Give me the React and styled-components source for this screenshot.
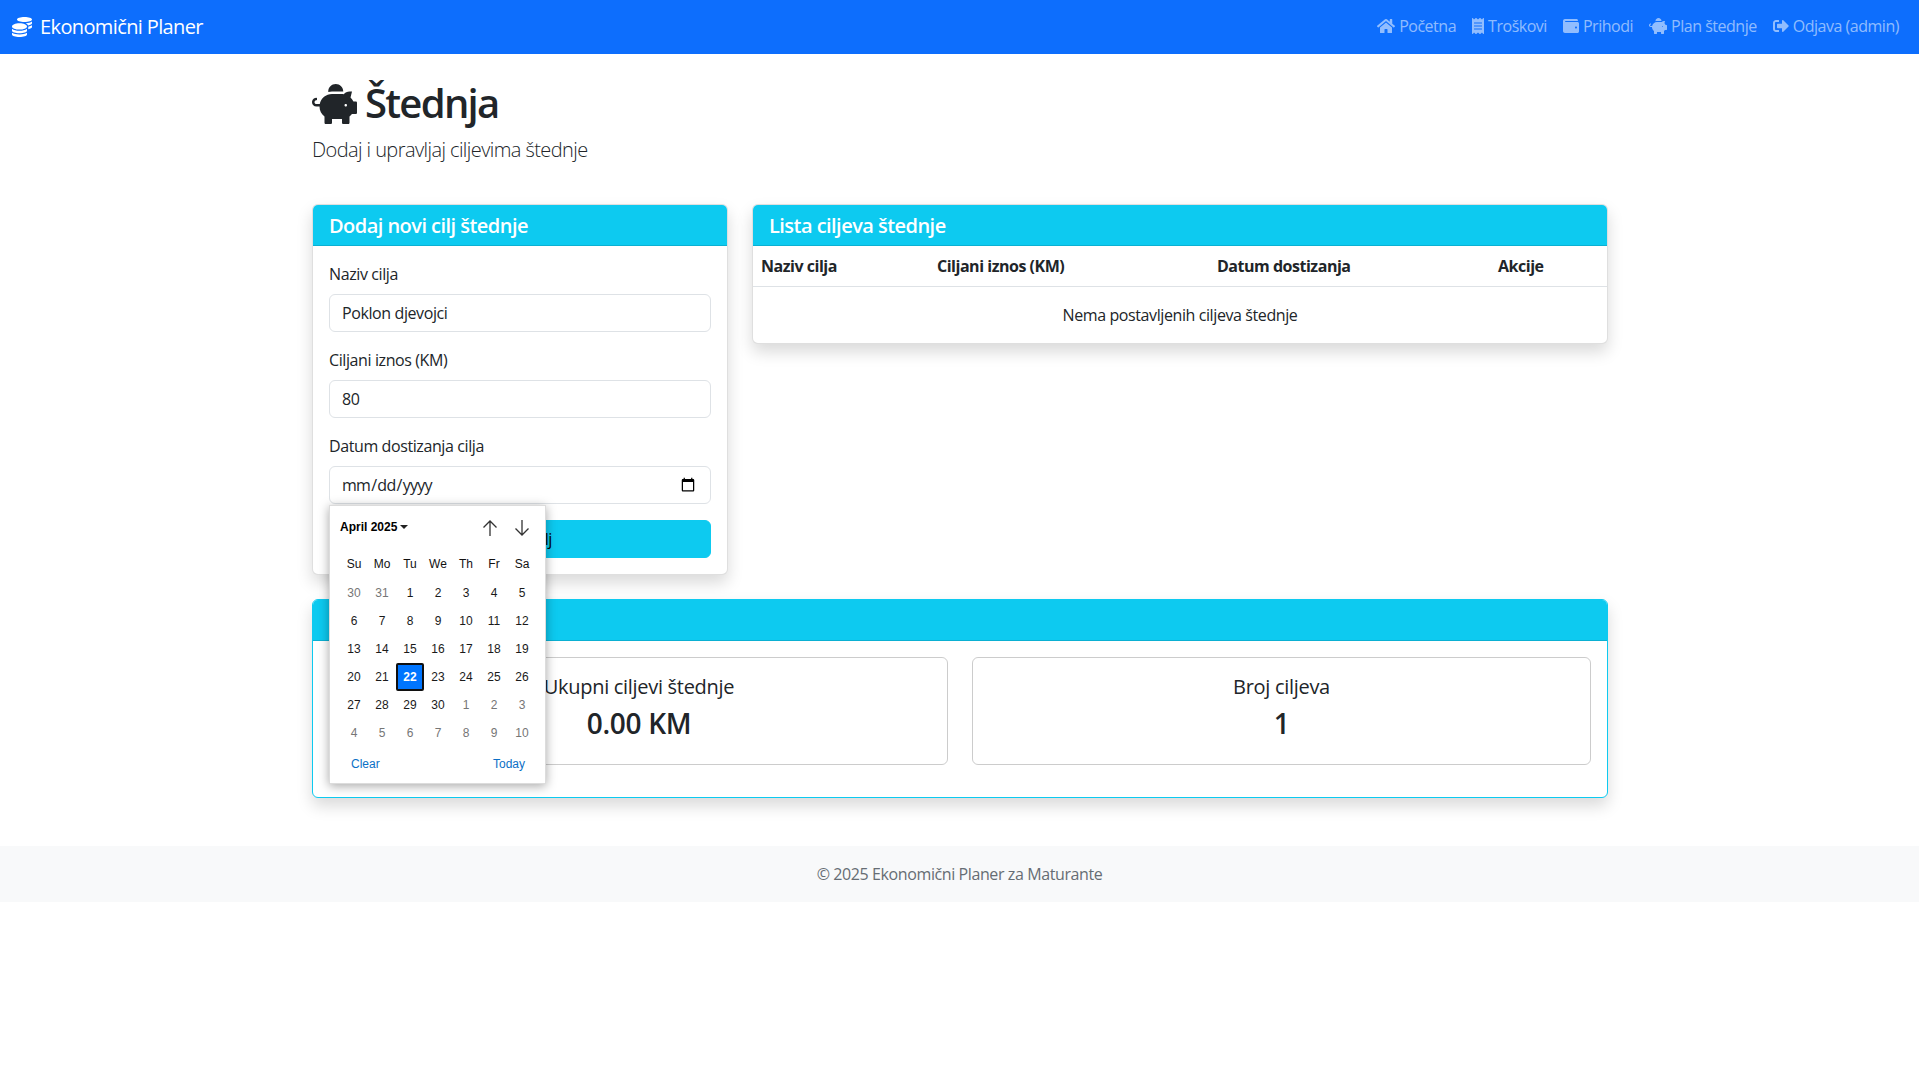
import React from "react";
import styled, { createGlobalStyle } from "styled-components";
import { FaCoins, FaHome, FaReceipt, FaWallet, FaPiggyBank, FaSignOutAlt } from "react-icons/fa";

const Global = createGlobalStyle`
  * { box-sizing: border-box; }
  html, body { margin: 0; padding: 0; background: #fff; }
  body {
    font-family: "Open Sans", "Noto Sans", sans-serif;
    font-size: 16px; line-height: 1.5; color: #212529;
    letter-spacing: -0.025em;
  }
`;

const Navbar = styled.nav`
  height: 54px; background: #0d6efd; display: flex; align-items: center;
  justify-content: space-between; padding: 0 12px;
`;
const Brand = styled.a`
  display: flex; align-items: center; gap: 8px; color: #fff; font-size: 20px; line-height: 30px;
  letter-spacing: -0.031em;
  svg { width: 20px; height: 20px; flex: none; }
`;
const NavList = styled.ul`
  display: flex; list-style: none; margin: 0 0 2px; padding: 0;
`;
const NavLink = styled.a`
  display: flex; align-items: center; gap: 4px; padding: 8px; color: rgba(255,255,255,.55);
  letter-spacing: -0.03em;
  svg { width: ${p => p.$w}px; height: 16px; flex: none; }
`;
const Main = styled.main`
  width: 1320px; margin: 24px auto 24px; padding: 0 11.5px 0 12.5px;
`;
const Title = styled.h1`
  display: flex; align-items: center; gap: 8px; margin: 0 0 8px; font-size: 40px; line-height: 46px;
  padding-top: 2px; font-weight: 600; letter-spacing: -0.043em;
  svg { width: 45px; height: 40px; flex: none; margin-bottom: -2px; }
`;
const Lead = styled.p`
  margin: 0 0 40px; font-size: 20px; line-height: 28px; padding-top: 2px; font-weight: 300; letter-spacing: -0.029em;
`;
const Row = styled.div`
  display: grid; grid-template-columns: 416px 856px; gap: 24px; margin-bottom: 24px; align-items: start;
`;
const Card = styled.section`
  background: #fff; border: 1px solid ${p => p.$info ? "#0dcaf0" : "rgba(0,0,0,.125)"}; border-radius: 6px;
  box-shadow: 0 8px 16px rgba(0,0,0,.15);
`;
const CardHeader = styled.header`
  background: #0dcaf0; color: #fff; padding: 8px 16px; border-bottom: 1px solid rgba(0,0,0,.125);
  border-radius: 5px 5px 0 0;
`;
const CardTitle = styled.h5`
  margin: 0; font-size: 20px; line-height: 23px; padding-top: 1px; font-weight: 600; letter-spacing: -0.027em;
`;
const CardBody = styled.div`
  padding: 16px;
`;
const Field = styled.div`
  position: relative; margin-bottom: 16px;
`;
const Label = styled.label`
  display: block; margin-bottom: 8px;
`;
const Input = styled.input`
  display: block; width: 100%; height: 38px; padding: 6px 12px; border: 1px solid #dee2e6; border-radius: 6px;
  font: inherit; letter-spacing: inherit; color: #212529; background: #fff; outline: none;
`;
const DateInput = styled(Input)`
  letter-spacing: -0.045em;
  padding-left: 11px;
`;
const SubmitButton = styled.button`
  display: block; width: 100%; height: 38px; border: 1px solid #0dcaf0; border-radius: 6px; background: #0dcaf0;
  color: #000; font: inherit; letter-spacing: inherit;
`;
const Popup = styled.div`
  position: absolute; left: 0; top: 71px; width: 217px; height: 279px; z-index: 5; background: #fff;
  padding: 0 9px 0 10px; font-family: "Liberation Sans", Arial, sans-serif; font-size: 12px; line-height: 14px;
  letter-spacing: 0; color: #1a1a1a; box-shadow: 0 2px 10px rgba(0,0,0,.35); border: 1px solid #dcdcdc;
  display: flex; flex-direction: column;
`;
const PopupHead = styled.div`
  display: flex; align-items: center; justify-content: space-between; height: 44px;
`;
const Month = styled.span`
  display: flex; align-items: center; gap: 3px; font-weight: 700; font-size: 12px; color: #000; margin-bottom: 2px;
  &::after { content: ""; border: 4px solid transparent; border-top-color: #222; border-bottom: 0; }
`;
const Arrows = styled.div`
  display: flex; gap: 12px; margin-right: 4px;
  svg { display: block; width: 20px; height: 20px; }
`;
const DayGrid = styled.div`
  display: grid; grid-template-columns: repeat(7, 28px); grid-template-rows: 29px repeat(6, 28px);
`;
const Cell = styled.div`
  display: flex; align-items: center; justify-content: center;
  color: ${p => p.$muted ? "#767676" : "#1a1a1a"};
  ${p => p.$head && "color:#111;padding-bottom:2px;"}
  ${p => p.$today && "background:#0075ff;color:#fff;font-weight:700;border:2px solid #101010;border-radius:2px;"}
`;
const PopupFoot = styled.div`
  display: flex; justify-content: space-between; padding: 0 11px; margin-top: 10px; color: #0b70c6;
`;
const Table = styled.table`
  width: 100%; border-collapse: collapse; table-layout: fixed;
`;
const Th = styled.th`
  padding: 8px; text-align: left; font-weight: 700; border-bottom: 1px solid #dee2e6; letter-spacing: -0.03em;
  width: ${p => p.$w}px;
`;
const Td = styled.td`
  padding: 16px 8px; text-align: center;
`;
const Stats = styled.div`
  display: grid; grid-template-columns: 1fr 619px; gap: 24px; margin: 0 0 16px 1px;
`;
const StatCard = styled.div`
  border: 1px solid rgba(0,0,0,.2); border-radius: 6px; padding: 16px; text-align: center;
`;
const StatTitle = styled.h5`
  margin: 0 0 8px; font-size: 20px; line-height: 23px; padding-top: 1px; font-weight: 500; letter-spacing: -0.015em;
`;
const StatValue = styled.h3`
  margin: 0 0 8px; font-size: 28px; line-height: 32.6px; padding-top: 1px; font-weight: 600; letter-spacing: -0.01em;
`;
const Footer = styled.footer`
  background: #f8f9fa; padding: 16px; text-align: center; height: 56px; margin-top: 48px; color: #666d74;
`;

const Up = () => (
  <svg viewBox="0 0 20 20" fill="none" stroke="#333" strokeWidth="1.3"><path d="M10 18V3M3.5 9.5 10 3l6.5 6.5" /></svg>
);
const Down = () => (
  <svg viewBox="0 0 20 20" fill="none" stroke="#333" strokeWidth="1.3"><path d="M10 2v15M3.5 10.5 10 17l6.5-6.5" /></svg>
);

const heads = ["Su", "Mo", "Tu", "We", "Th", "Fr", "Sa"];
const days = [
  [30, 1], [31, 1], ...Array.from({ length: 30 }, (_, i) => [i + 1, 0]),
  [1, 1], [2, 1], [3, 1], [4, 1], [5, 1], [6, 1], [7, 1], [8, 1], [9, 1], [10, 1],
];
const links = [
  [FaHome, "Početna", 18], [FaReceipt, "Troškovi", 12], [FaWallet, "Prihodi", 16],
  [FaPiggyBank, "Plan štednje", 18], [FaSignOutAlt, "Odjava (admin)", 16],
];

function DatePopup() {
  return (
    <Popup>
      <PopupHead>
        <Month>April 2025</Month>
        <Arrows><Up /><Down /></Arrows>
      </PopupHead>
      <DayGrid>
        {heads.map(h => <Cell key={h} $head>{h}</Cell>)}
        {days.map(([d, m], i) => <Cell key={i} $muted={!!m} $today={d === 22 && !m}>{d}</Cell>)}
      </DayGrid>
      <PopupFoot><span>Clear</span><span>Today</span></PopupFoot>
    </Popup>
  );
}

export default function App() {
  return (
    <>
      <Global />
      <Navbar>
        <Brand><FaCoins />Ekonomični Planer</Brand>
        <NavList>
          {links.map(([Icon, text, w]) => (
            <li key={text}><NavLink $w={w}><Icon />{text}</NavLink></li>
          ))}
        </NavList>
      </Navbar>
      <Main>
        <Title><FaPiggyBank />Štednja</Title>
        <Lead>Dodaj i upravljaj ciljevima štednje</Lead>
        <Row>
          <Card>
            <CardHeader><CardTitle>Dodaj novi cilj štednje</CardTitle></CardHeader>
            <CardBody>
              <Field>
                <Label>Naziv cilja</Label>
                <Input defaultValue="Poklon djevojci" />
              </Field>
              <Field>
                <Label>Ciljani iznos (KM)</Label>
                <Input defaultValue="80" />
              </Field>
              <Field>
                <Label>Datum dostizanja cilja</Label>
                <DateInput type="date" />
                <DatePopup />
              </Field>
              <SubmitButton>Dodaj cilj</SubmitButton>
            </CardBody>
          </Card>
          <Card>
            <CardHeader><CardTitle>Lista ciljeva štednje</CardTitle></CardHeader>
            <Table>
              <thead>
                <tr>
                  <Th $w={176}>Naziv cilja</Th>
                  <Th $w={280}>Ciljani iznos (KM)</Th>
                  <Th $w={281}>Datum dostizanja</Th>
                  <Th>Akcije</Th>
                </tr>
              </thead>
              <tbody>
                <tr><Td colSpan={4}>Nema postavljenih ciljeva štednje</Td></tr>
              </tbody>
            </Table>
          </Card>
        </Row>
        <Card $info>
          <CardHeader><CardTitle>Pregled štednje</CardTitle></CardHeader>
          <CardBody>
            <Stats>
              <StatCard>
                <StatTitle>Ukupni ciljevi štednje</StatTitle>
                <StatValue>0.00 KM</StatValue>
              </StatCard>
              <StatCard>
                <StatTitle>Broj ciljeva</StatTitle>
                <StatValue>1</StatValue>
              </StatCard>
            </Stats>
          </CardBody>
        </Card>
      </Main>
      <Footer>© 2025 Ekonomični Planer za Maturante</Footer>
    </>
  );
}
